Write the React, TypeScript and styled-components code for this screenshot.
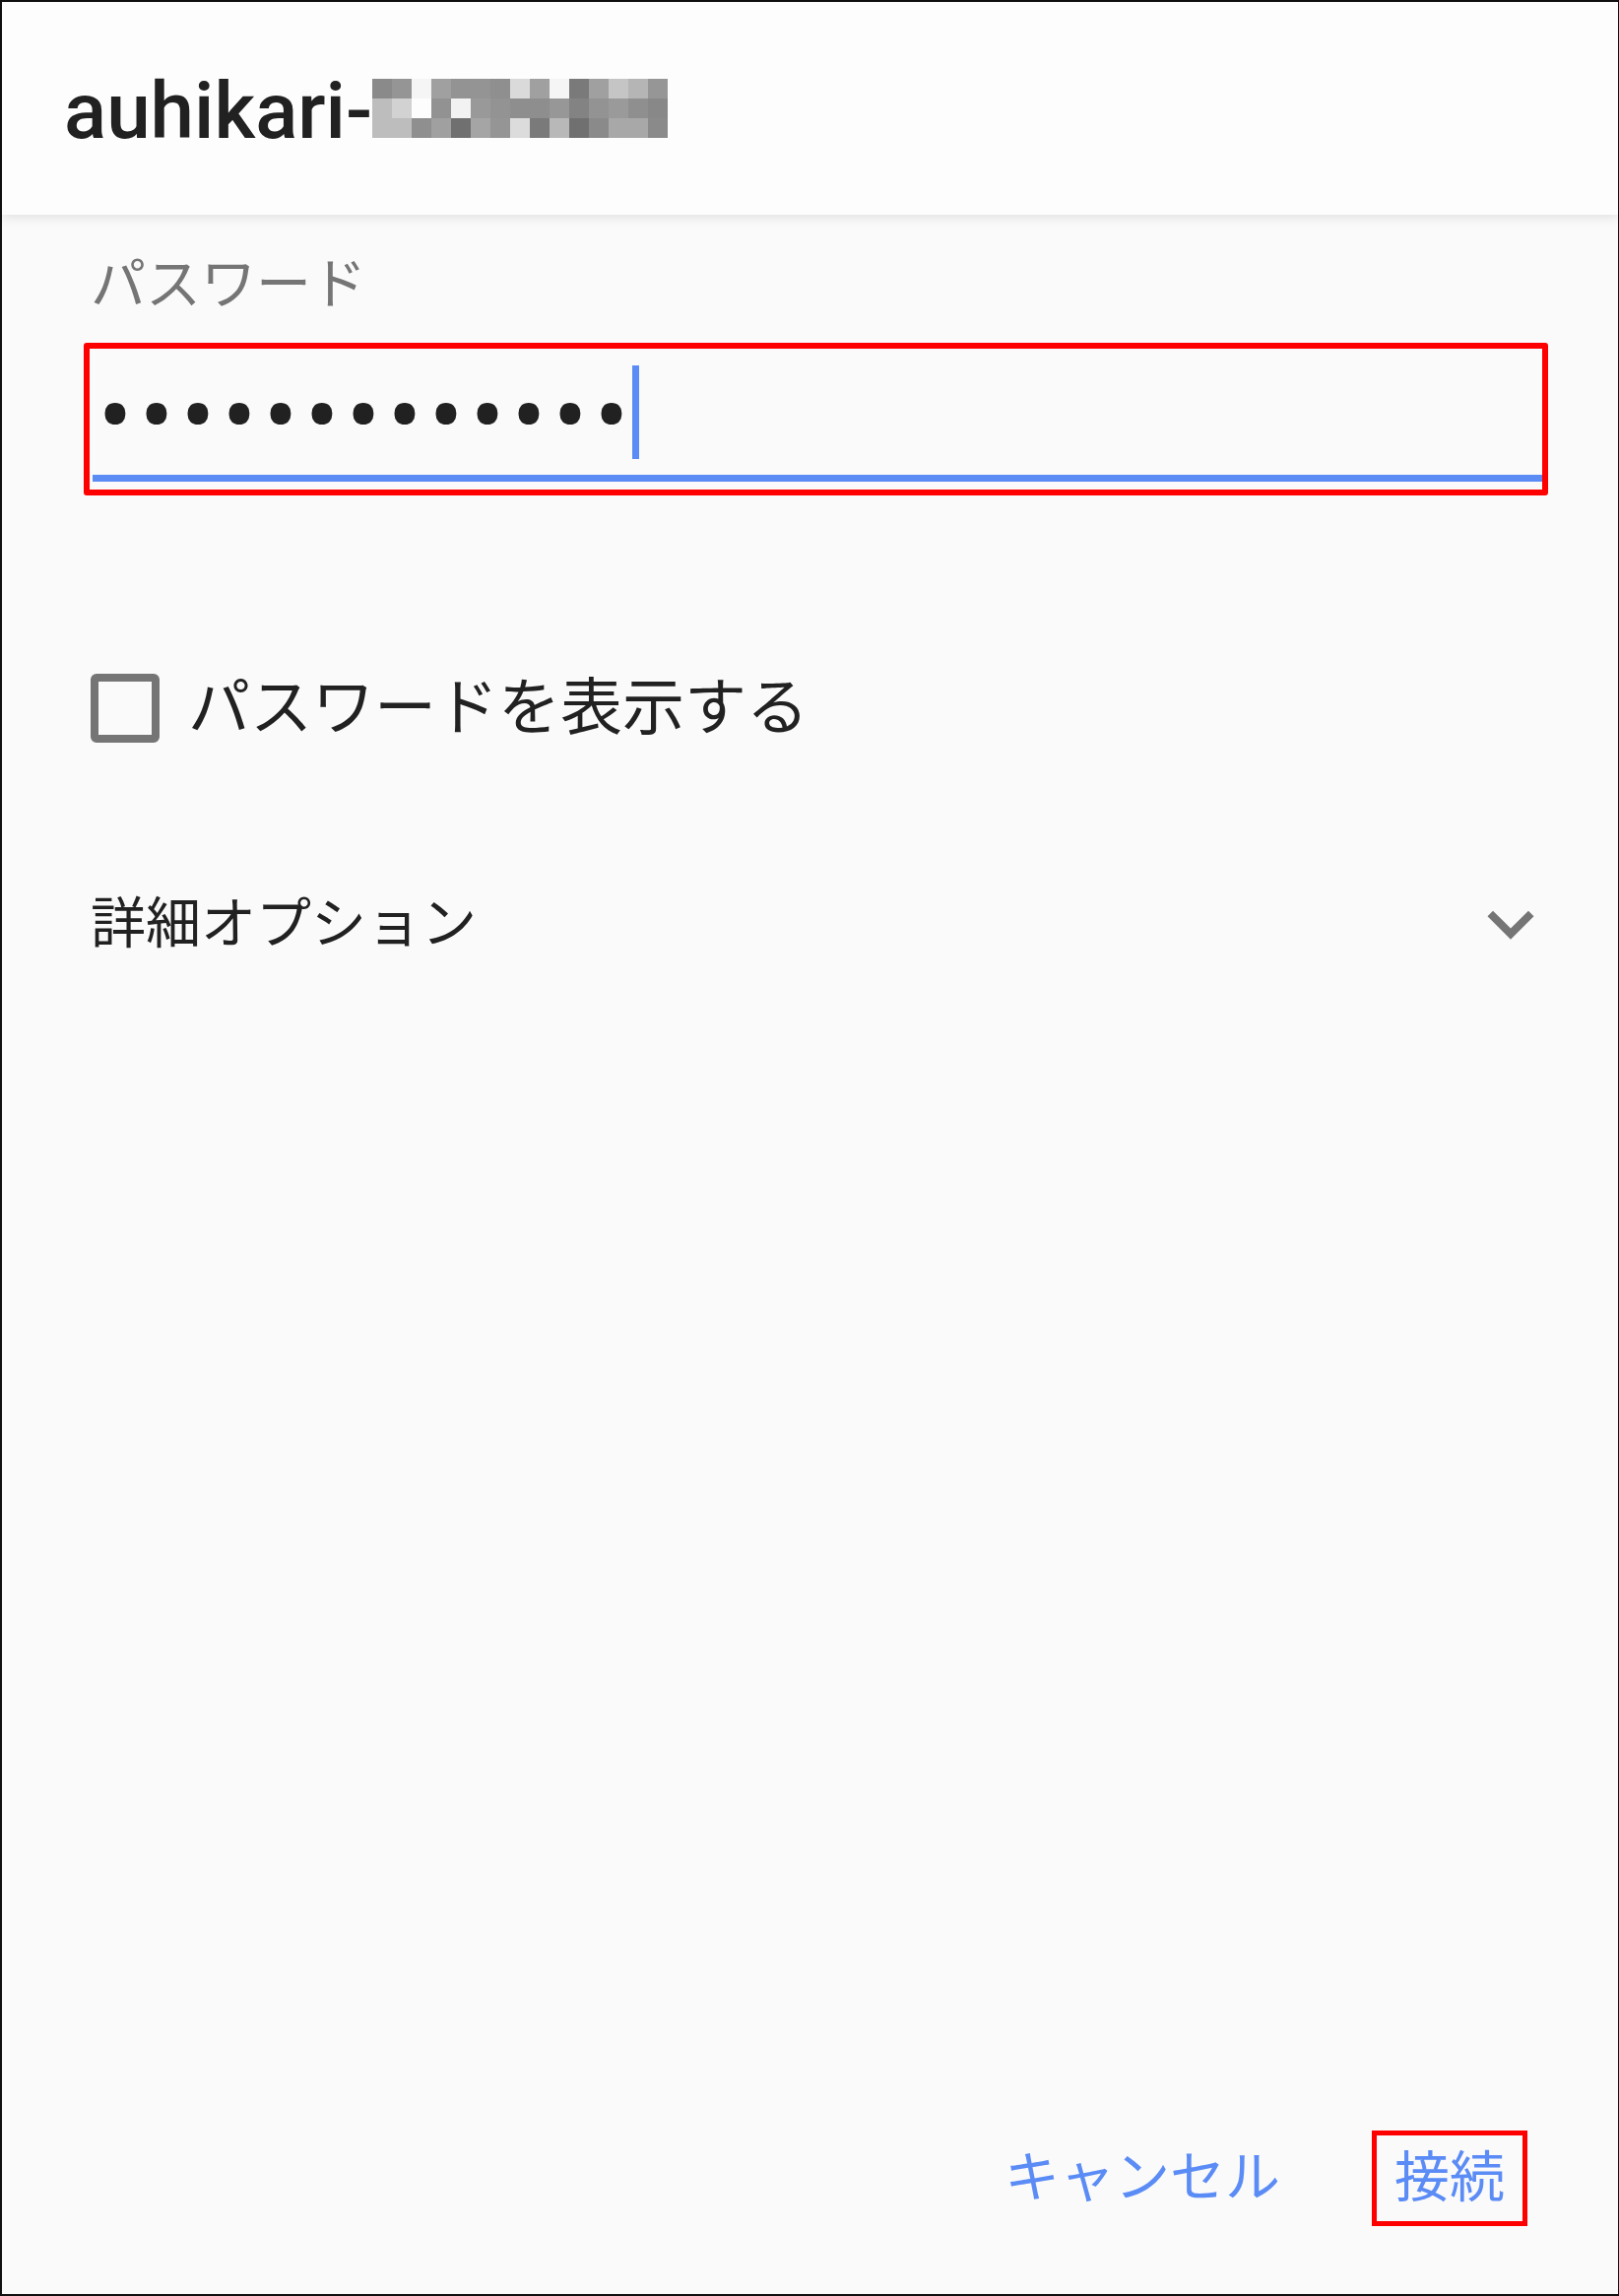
import styled, { createGlobalStyle } from "styled-components";

const GlobalStyle = createGlobalStyle`
  html, body {
    margin: 0;
    padding: 0;
    background: #ffffff;
  }
  * {
    box-sizing: border-box;
  }
`;

const BLUE = "#5b8cf6";

// pixelated part of the network name
const mosaic = [
  ["#8a8a8a", "#959595", "#f5f5f5", "#a0a0a0", "#939393", "#949494", "#8f8f8f", "#dadada", "#a0a0a0", "#f5f5f5", "#7a7a7a", "#a0a0a0", "#c5c5c5", "#b5b5b5", "#969696"],
  ["#bdbdbd", "#d2d2d2", "#fdfdfd", "#929292", "#f2f2f2", "#999999", "#939393", "#8e8e8e", "#8e8e8e", "#979797", "#838383", "#939393", "#9a9a9a", "#8f8f8f", "#888888"],
  ["#bdbdbd", "#bdbdbd", "#8f8f8f", "#a0a0a0", "#707070", "#a5a5a5", "#959595", "#dcdcdc", "#7a7a7a", "#b8b8b8", "#707070", "#8a8a8a", "#a8a8a8", "#a8a8a8", "#8a8a8a"],
];

const PASSWORD_LENGTH = 13;

const ExpandIcon = () => (
  <svg width="94" height="94" viewBox="0 0 24 24">
    <path d="M16.59 8.59 12 13.17 7.41 8.59 6 10l6 6 6-6z" fill="#757575" />
  </svg>
);

const App: React.FC = () => {
  return (
    <>
      <GlobalStyle />
      <Frame>
        <Header>
          <Title>auhikari-</Title>
          <Mosaic>
            {mosaic.flat().map((color, i) => (
              <MosaicCell key={i} $color={color} />
            ))}
          </Mosaic>
        </Header>

        <Body>
          <FieldLabel>パスワード</FieldLabel>
          <Highlight>
            <PasswordField>
              {Array.from({ length: PASSWORD_LENGTH }).map((_, i) => (
                <PasswordDot key={i}>•</PasswordDot>
              ))}
              <Caret />
            </PasswordField>
          </Highlight>

          <CheckRow>
            <CheckBox />
            <CheckText>パスワードを表示する</CheckText>
          </CheckRow>

          <OptionRow>
            <OptionText>詳細オプション</OptionText>
            <ExpandIcon />
          </OptionRow>
        </Body>

        <Footer>
          <TextButton>キャンセル</TextButton>
          <TextButton $marked>接続</TextButton>
        </Footer>
      </Frame>
    </>
  );
};

const Frame = styled.div`
  display: flex;
  flex-direction: column;
  width: 1644px;
  height: 2331px;
  border-top: 2px solid #111;
  border-left: 2px solid #111;
  border-right: 1px solid #111;
  border-bottom: 2px solid #111;
  background-color: #fafafa;
  font-family: Roboto, "Noto Sans CJK JP", sans-serif;
`;

const Header = styled.header`
  display: flex;
  align-items: flex-start;
  flex-shrink: 0;
  height: 216px;
  padding: 64px 0 0 63px;
  background-color: #fdfdfd;
  box-shadow: 0 3px 10px rgba(0, 0, 0, 0.1);
  position: relative;
  z-index: 1;
`;

const Title = styled.h1`
  margin: 0;
  font-size: 80px;
  font-weight: 500;
  line-height: 94px;
  color: #212121;
`;

const Mosaic = styled.div`
  display: grid;
  grid-template-columns: repeat(15, 20px);
  grid-auto-rows: 20px;
  margin-top: 14px;
`;

const MosaicCell = styled.div<{ $color: string }>`
  background-color: ${(p) => p.$color};
`;

const Body = styled.main`
  display: flex;
  flex-direction: column;
  padding: 33px 62px 0 90px;
`;

const FieldLabel = styled.label`
  font-size: 56px;
  line-height: 76px;
  color: #757575;
`;

const Highlight = styled.div`
  height: 155px;
  margin: 21px 9px 0 -7px;
  padding: 0 0 8px 3px;
  border: 6px solid #ff0000;
  border-radius: 3px;
`;

const PasswordField = styled.div`
  display: flex;
  align-items: center;
  height: 135px;
  padding-left: 2px;
  border-bottom: 7px solid ${BLUE};
`;

const PasswordDot = styled.span`
  display: inline-block;
  width: 42px;
  padding-top: 9px;
  text-align: center;
  font-family: Roboto, sans-serif;
  font-size: 104px;
  line-height: 104px;
  color: #212121;
`;

const Caret = styled.span`
  width: 7px;
  height: 95px;
  background-color: ${BLUE};
`;

const CheckRow = styled.div`
  display: flex;
  align-items: center;
  gap: 29px;
  height: 90px;
  margin-top: 171px;
`;

const CheckBox = styled.span`
  width: 70px;
  height: 70px;
  border: 8px solid #757575;
  border-radius: 6px;
`;

const CheckText = styled.span`
  font-size: 63px;
  line-height: 90px;
  color: #212121;
`;

const OptionRow = styled.div`
  display: flex;
  align-items: center;
  justify-content: space-between;
  height: 94px;
  margin-top: 127px;
`;

const OptionText = styled.span`
  font-size: 56px;
  line-height: 94px;
  color: #212121;
`;

const Footer = styled.footer`
  display: flex;
  justify-content: flex-end;
  align-items: center;
  gap: 75px;
  margin-top: auto;
  padding: 0 92px 69px 0;
`;

const TextButton = styled.button<{ $marked?: boolean }>`
  height: 97px;
  padding: 0 18px;
  border: ${(p) => (p.$marked ? "5px solid #ff0000" : "none")};
  background: none;
  font-family: Roboto, "Noto Sans CJK JP", sans-serif;
  font-size: 56px;
  line-height: 87px;
  color: ${BLUE};
`;

export default App;
